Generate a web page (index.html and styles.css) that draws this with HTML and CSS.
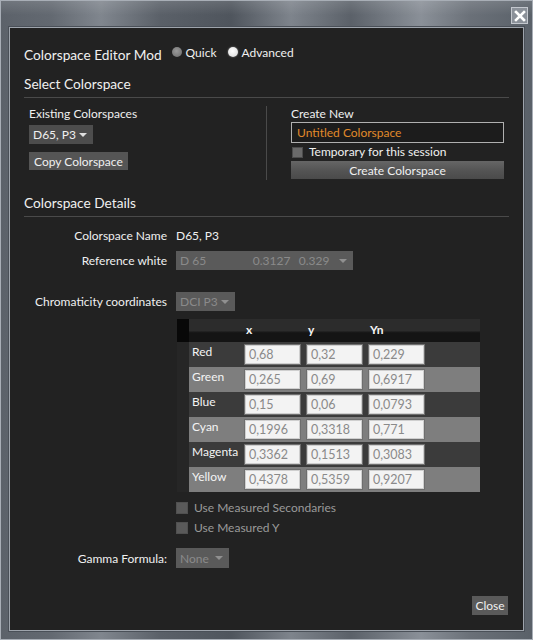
FILE: index.html
```html
<!DOCTYPE html>
<html>
<head>
<meta charset="utf-8">
<link rel="stylesheet" href="styles.css">
</head>
<body>
<div class="window">
  <div class="titlebar">
    <div class="close-x">
      <svg width="12" height="12" viewBox="0 0 12 12"><path d="M2 2 L10 10 M10 2 L2 10" stroke="#fff" stroke-width="2.6" stroke-linecap="square"/></svg>
    </div>
  </div>
  <div class="content">
    <div class="mode-row">
      <span class="mode-title">Colorspace Editor Mod</span>
      <span class="radio"></span><span class="radio-label">Quick</span>
      <span class="radio on"></span><span class="radio-label">Advanced</span>
    </div>
    <div class="section-title">Select Colorspace</div>
    <div class="rule"></div>
    <div class="select-cols">
      <div class="col-left">
        <div class="small-label">Existing Colorspaces</div>
        <div class="dropdown dd-existing"><span>D65, P3</span><span class="caret"></span></div>
        <div class="btn btn-copy">Copy Colorspace</div>
      </div>
      <div class="vdivider"></div>
      <div class="col-right">
        <div class="small-label">Create New</div>
        <div class="text-input">Untitled Colorspace</div>
        <div class="check-row"><span class="checkbox"></span><span>Temporary for this session</span></div>
        <div class="btn btn-create">Create Colorspace</div>
      </div>
    </div>
    <div class="section-title details-title">Colorspace Details</div>
    <div class="rule"></div>
    <div class="details">
      <div class="d-label row-name">Colorspace Name</div>
      <div class="d-value row-name">D65, P3</div>

      <div class="d-label row-ref">Reference white</div>
      <div class="d-value row-ref">
        <div class="dropdown disabled dd-ref"><span class="ref-name">D 65</span><span class="ref-x">0.3127</span><span class="ref-y">0.329</span><span class="caret"></span></div>
      </div>

      <div class="d-label row-chrom">Chromaticity coordinates</div>
      <div class="d-value row-chrom">
        <div class="dropdown disabled dd-chrom"><span>DCI P3</span><span class="caret"></span></div>
      </div>

      <div class="d-value full table-cell">
        <div class="ctable">
          <div class="trow thead">
            <div class="strip"></div><div class="tlabel"></div>
            <div class="th">x</div><div class="th">y</div><div class="th">Yn</div>
          </div>
          <div class="trow dark"><div class="strip"></div><div class="tlabel">Red</div><div class="cell"><div class="num">0,68</div></div><div class="cell"><div class="num">0,32</div></div><div class="cell"><div class="num">0,229</div></div></div>
          <div class="trow light"><div class="strip"></div><div class="tlabel">Green</div><div class="cell"><div class="num">0,265</div></div><div class="cell"><div class="num">0,69</div></div><div class="cell"><div class="num">0,6917</div></div></div>
          <div class="trow dark"><div class="strip"></div><div class="tlabel">Blue</div><div class="cell"><div class="num">0,15</div></div><div class="cell"><div class="num">0,06</div></div><div class="cell"><div class="num">0,0793</div></div></div>
          <div class="trow light"><div class="strip"></div><div class="tlabel">Cyan</div><div class="cell"><div class="num">0,1996</div></div><div class="cell"><div class="num">0,3318</div></div><div class="cell"><div class="num">0,771</div></div></div>
          <div class="trow dark"><div class="strip"></div><div class="tlabel">Magenta</div><div class="cell"><div class="num">0,3362</div></div><div class="cell"><div class="num">0,1513</div></div><div class="cell"><div class="num">0,3083</div></div></div>
          <div class="trow light"><div class="strip"></div><div class="tlabel">Yellow</div><div class="cell"><div class="num">0,4378</div></div><div class="cell"><div class="num">0,5359</div></div><div class="cell"><div class="num">0,9207</div></div></div>
        </div>
      </div>

      <div class="d-value full check-dis first"><span class="checkbox dis"></span><span>Use Measured Secondaries</span></div>
      <div class="d-value full check-dis"><span class="checkbox dis"></span><span>Use Measured Y</span></div>

      <div class="d-label row-gamma">Gamma Formula:</div>
      <div class="d-value row-gamma">
        <div class="dropdown disabled dd-gamma"><span>None</span><span class="caret"></span></div>
      </div>
    </div>
    <div class="footer">
      <div class="btn btn-close">Close</div>
    </div>
  </div>
</div>
</body>
</html>
```

FILE: styles.css
```css
* { box-sizing: border-box; }
html, body {
  margin: 0;
  padding: 0;
  background: #6a7078;
}
body {
  font-family: "Lato", "Noto Sans", sans-serif;
  color: #f0f0f0;
  font-size: 12px;
}
.window {
  width: 533px;
  height: 640px;
  display: flex;
  flex-direction: column;
  padding: 0 8px 8px 8px;
  border: 1px solid #a8aeb6;
  background:
    linear-gradient(180deg, rgba(255,255,255,0.12) 0px, rgba(255,255,255,0) 14px),
    linear-gradient(90deg, #5c626a 0px, #636971 50px, #80868e 100px, #5a6068 160px, #4f555d 230px, #7e848c 290px, #5b6169 350px, #8a9098 420px, #6a7078 470px, #596068 533px);
}
.titlebar {
  height: 26px;
  flex: none;
  display: flex;
  justify-content: flex-end;
  align-items: flex-start;
  padding-top: 6px;
  margin-right: -4px;
}
.close-x {
  width: 17px;
  height: 17px;
  background: #8b9199;
  border: 1px solid #c4c8ce;
  display: flex;
  align-items: center;
  justify-content: center;
}
.content {
  flex: 1;
  background: #222222;
  border: 1px solid #9ea4ac;
  box-shadow: 0 0 0 1px #4a5058;
  padding: 0 14px 0 14px;
  display: flex;
  flex-direction: column;
}
.mode-row {
  display: flex;
  align-items: center;
  margin-top: 15px;
  height: 20px;
}
.mode-title {
  font-size: 13.7px;
  margin-right: 10px;
  margin-top: 2px;
}
.radio {
  width: 10px;
  height: 10px;
  border-radius: 50%;
  background: radial-gradient(circle at 45% 40%, #9a9a9a, #6a6a6a);
  margin-right: 4px;
  margin-top: -2px;
}
.radio.on {
  background: radial-gradient(circle at 45% 40%, #ffffff, #d8d8d8);
  box-shadow: 0 0 2px #888;
}
.radio-label {
  font-size: 12px;
  margin-right: 11px;
  margin-top: -2px;
}
.section-title {
  font-size: 13.7px;
  margin-top: 12px;
  line-height: 18px;
}
.rule {
  height: 1px;
  background: #4a4a4a;
  margin-top: 4px;
}
.select-cols {
  display: flex;
  margin-top: 8px;
  height: 74px;
}
.col-left {
  width: 242px;
  padding-left: 5px;
  display: flex;
  flex-direction: column;
  align-items: flex-start;
}
.vdivider {
  width: 1px;
  background: #4a4a4a;
}
.col-right {
  width: 213px;
  margin-left: 24px;
  display: flex;
  flex-direction: column;
}
.small-label {
  line-height: 16px;
  font-size: 12px;
}
.dropdown {
  display: flex;
  align-items: center;
  height: 19px;
  background: #4d4d4d;
  padding: 0 6px 0 4px;
  font-size: 12px;
}
.dd-existing {
  width: 64px;
  margin-top: 3px;
  justify-content: space-between;
}
.caret {
  width: 0;
  height: 0;
  border-left: 4px solid transparent;
  border-right: 4px solid transparent;
  border-top: 4px solid #e0e0e0;
}
.btn {
  background: #555555;
  color: #f0f0f0;
  font-size: 12px;
  display: flex;
  align-items: center;
  justify-content: center;
}
.btn-copy {
  margin-top: 8px;
  height: 18px;
  padding: 0 5px;
}
.text-input {
  height: 21px;
  border: 1px solid #b0b0b0;
  background: #1c1c1c;
  color: #e08a2a;
  padding-left: 5px;
  line-height: 19px;
  font-size: 12px;
}
.check-row {
  display: flex;
  align-items: center;
  margin-top: 2px;
  height: 14px;
  line-height: 14px;
}
.checkbox {
  width: 11px;
  height: 11px;
  background: #6a6a6a;
  border: 1px solid #4c4c4c;
  margin-left: 1px;
  margin-right: 6px;
}
.btn-create {
  margin-top: 2px;
  height: 18px;
  background: linear-gradient(180deg, #666 0%, #555 50%, #4a4a4a 100%);
}
.details-title {
  margin-top: 14px;
}
.details {
  display: grid;
  grid-template-columns: 143px 1fr;
  column-gap: 9px;
  margin-top: 8px;
}
.d-label {
  text-align: right;
  font-size: 12px;
  display: flex;
  align-items: center;
  justify-content: flex-end;
}
.d-value {
  display: flex;
  align-items: center;
  font-size: 12px;
}
.d-value.full { grid-column: 2; }
.row-name { height: 20px; }
.row-ref { height: 19px; margin-top: 6px; }
.row-chrom { height: 19px; margin-top: 22px; }
.disabled {
  background: #5a5a5a;
  color: #8a8a8a;
}
.disabled .caret { border-top-color: #909090; }
.dd-ref {
  width: 177px;
}
.ref-name { width: 76px; }
.ref-x { width: 48px; }
.ref-y { width: 42px; }
.dd-chrom {
  width: 59px;
  justify-content: space-between;
}
.table-cell { margin-top: 8px; padding-left: 1px; }
.ctable {
  width: 303px;
  display: flex;
  flex-direction: column;
}
.trow {
  display: grid;
  grid-template-columns: 12px 55px 62px 62px 1fr;
  height: 25px;
}
.trow.thead {
  height: 23px;
  background: linear-gradient(180deg, #2c2c2c 0%, #2c2c2c 50%, #141414 60%, #141414 100%);
}
.thead .strip { background: #080808; }
.th {
  font-weight: bold;
  font-size: 12px;
  padding-left: 2px;
  line-height: 22px;
  color: #f4f4f4;
}
.strip { background: #262626; }
.trow.dark { background: #3b3b3b; }
.trow.light { background: #7e7e7e; }
.tlabel {
  padding-left: 3px;
  padding-top: 1px;
  line-height: 17px;
  color: #f4f4f4;
  font-size: 12px;
}
.cell { padding-top: 2px; }
.num {
  width: 57px;
  height: 21px;
  background: #f3f3f3;
  border: 1px solid #6e6e6e;
  box-shadow: inset 0 0 0 1px #cfcfcf;
  color: #8a8a8a;
  font-size: 12.5px;
  line-height: 19px;
  padding-left: 4px;
}
.check-dis {
  color: #9a9a9a;
  height: 20px;
  line-height: 20px;
}
.check-dis.first { margin-top: 6px; }
.checkbox.dis {
  width: 12px;
  height: 12px;
  margin-left: 0;
  margin-right: 6px;
  background: #5a5a5a;
  border: 1px solid #505050;
}
.row-gamma { height: 20px; margin-top: 10px; }
.dd-gamma {
  width: 53px;
  height: 20px;
  justify-content: space-between;
  padding-right: 6px;
}
.footer {
  display: flex;
  justify-content: flex-end;
  margin-top: 28px;
}
.btn-close {
  width: 36px;
  height: 19px;
  background: #5a5a5a;
  margin-right: 1px;
}
```
